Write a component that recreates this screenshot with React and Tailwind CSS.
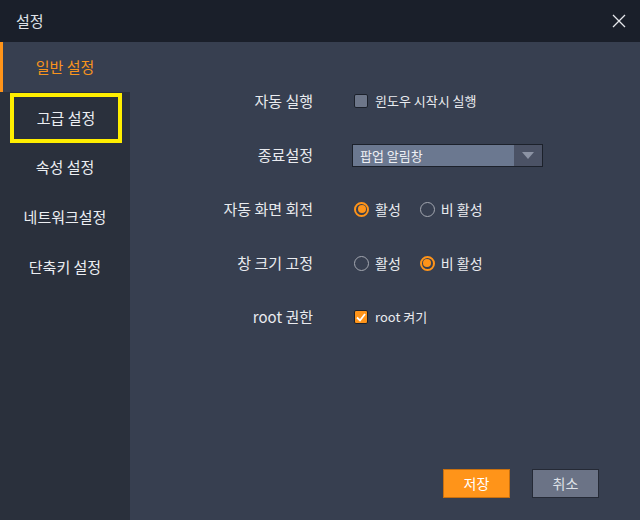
import React from 'react';

const font = { fontFamily: '"Noto Sans CJK KR", "Noto Sans", sans-serif' };

const Radio = ({ on, label }) => (
  <div className="flex items-center gap-[6px]">
    {on ? (
      <span className="w-[15px] h-[15px] rounded-full border-2 border-[#ff9419] flex items-center justify-center">
        <span className="w-[8px] h-[8px] rounded-full bg-[#ff9419]" />
      </span>
    ) : (
      <span className="w-[15px] h-[15px] rounded-full border-[1.5px] border-[#a3a7b0]" />
    )}
    <span className="text-[14px] text-[#e9ebef]">{label}</span>
  </div>
);

const Row = ({ label, children }) => (
  <div className="flex items-center h-[54px]">
    <div className="w-[183px] text-right text-[15px] text-[#e9ebef]">{label}</div>
    <div className="ml-[41px] flex items-center">{children}</div>
  </div>
);

export default function App() {
  const items = ['고급 설정', '속성 설정', '네트워크설정', '단축키 설정'];
  return (
    <div className="w-[640px] h-[520px] flex flex-col bg-[#373f50]" style={font}>
      <div className="h-[42px] bg-[#1a1f2a] flex items-center justify-between px-[16px]">
        <span className="text-[15px] text-[#dfe2e8]">설정</span>
        <svg width="14" height="14" viewBox="0 0 14 14" className="mr-[-2px]">
          <path d="M1 1 L13 13 M13 1 L1 13" stroke="#e6e8ec" strokeWidth="1.3" />
        </svg>
      </div>
      <div className="flex flex-1">
        <div className="w-[130px] flex flex-col">
          <div className="h-[50px] border-l-[3px] border-[#ff9419] flex items-center justify-center pr-[3px] text-[15px] text-[#f7941d]">
            일반 설정
          </div>
          <div className="flex-1 bg-[#2a303c] flex flex-col">
            {items.map((t, i) => (
              <div key={t} className="h-[50px] flex items-center justify-center text-[15px] text-[#eceef2]">
                {i === 0 ? (
                  <div className="w-[112px] h-[50px] ml-[2px] mt-[2px] border-[4px] border-[#ffee00] flex items-center justify-center">
                    {t}
                  </div>
                ) : (
                  t
                )}
              </div>
            ))}
          </div>
        </div>
        <div className="flex-1 flex flex-col pt-[32px] pb-[22px] pr-[41px]">
          <Row label="자동 실행">
            <div className="flex items-center gap-[7px]">
              <span className="w-[14px] h-[14px] bg-[#6d7689] border border-[#1c212b] rounded-[2px]" />
              <span className="text-[13px] text-[#e9ebef]">윈도우 시작시 실행</span>
            </div>
          </Row>
          <Row label="종료설정">
            <div className="ml-[-2px] w-[191px] h-[23px] flex border border-[#1c212b] bg-[#6b7890]">
              <span className="flex-1 pl-[7px] text-[13px] leading-[21px] text-[#eef0f4]">팝업 알림창</span>
              <span className="w-[28px] bg-[#4b5265] flex items-center justify-center">
                <svg width="12" height="7" viewBox="0 0 12 7">
                  <path d="M0 0 L12 0 L6 7 Z" fill="#8c93a4" />
                </svg>
              </span>
            </div>
          </Row>
          <Row label="자동 화면 회전">
            <div className="flex items-center gap-[19px]">
              <Radio on label="활성" />
              <Radio label="비 활성" />
            </div>
          </Row>
          <Row label="창 크기 고정">
            <div className="flex items-center gap-[19px]">
              <Radio label="활성" />
              <Radio on label="비 활성" />
            </div>
          </Row>
          <Row label="root 권한">
            <div className="flex items-center gap-[7px]">
              <span className="w-[14px] h-[14px] bg-[#ff9419] border border-[#1c212b] rounded-[2px] flex items-center justify-center">
                <svg width="10" height="9" viewBox="0 0 10 9">
                  <path d="M1 4.5 L4 7.5 L9 1" stroke="#ffffff" strokeWidth="1.8" fill="none" />
                </svg>
              </span>
              <span className="text-[13px] text-[#e9ebef]">root 켜기</span>
            </div>
          </Row>
          <div className="flex-1" />
          <div className="flex justify-end gap-[22px]">
            <button className="w-[67px] h-[29px] bg-[#ff9419] border border-[#c8700f] text-[14px] text-white">
              저장
            </button>
            <button className="w-[67px] h-[29px] bg-[#6b7386] border border-[#252a36] text-[14px] text-[#dfe2e8]">
              취소
            </button>
          </div>
        </div>
      </div>
    </div>
  );
}
